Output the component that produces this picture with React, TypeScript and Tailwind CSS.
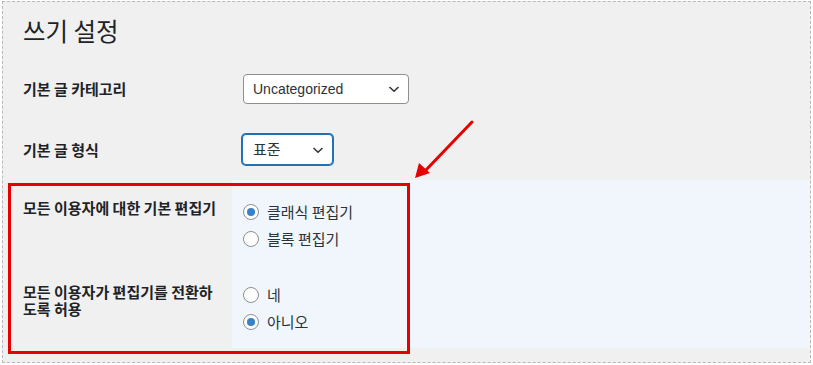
import { useState } from 'react';

const ko = { fontFamily: '"Noto Sans CJK KR", "Liberation Sans", sans-serif' };
const latin = { fontFamily: '"Liberation Sans", "Noto Sans CJK KR", sans-serif' };

function Chevron() {
  return (
    <svg width="12" height="12" viewBox="0 0 12 12" className="shrink-0">
      <path d="M1.5 4 L6 8.2 L10.5 4" fill="none" stroke="#2c3338" strokeWidth="1.5" />
    </svg>
  );
}

function Radio({ label, checked, onClick }: { label: string; checked: boolean; onClick: () => void }) {
  return (
    <div className="flex h-[27px] items-center gap-2 cursor-pointer" onClick={onClick}>
      <span className="flex h-4 w-4 items-center justify-center rounded-full border border-[#8c8f94] bg-white">
        {checked && <span className="h-2 w-2 rounded-full bg-[#3582c4]" />}
      </span>
      <span className="text-[15px] leading-[20px] text-[#2c3338]">{label}</span>
    </div>
  );
}

export default function App() {
  const [editor, setEditor] = useState('classic');
  const [allowSwitch, setAllowSwitch] = useState('no');

  return (
    <div className="w-[813px] h-[365px] bg-white pt-[1px] pl-[2px]" style={ko}>
      <div className="relative w-[809px] h-[362px] border border-dashed border-[#b9b9b9] bg-[#f0f0f1] text-[#1d2327]">
        <h1 className="mt-[14px] pl-[20px] h-[30px] text-[24.5px] leading-[30px] font-normal">쓰기 설정</h1>

        <div className="mt-[13px] flex h-[60px] items-center">
          <div className="w-[229px] pl-[20px] text-[15px] font-semibold leading-[18px]">기본 글 카테고리</div>
          <div className="pl-[11px]">
            <div className="flex h-[30px] w-[166px] items-center justify-between rounded-[4px] border border-[#8c8f94] bg-white pl-[9px] pr-[8px] text-[14px] text-[#2c3338]" style={latin}>
              <span>Uncategorized</span>
              <Chevron />
            </div>
          </div>
        </div>

        <div className="flex h-[61px] items-center">
          <div className="w-[229px] pl-[20px] text-[15px] font-semibold leading-[18px]">기본 글 형식</div>
          <div className="pl-[10px]">
            <div className="flex h-[31px] w-[91px] items-center justify-between rounded-[4px] border border-[#2271b1] bg-white pl-[10px] pr-[8px] text-[15px] text-[#2c3338] shadow-[0_0_0_1px_#2271b1]">
              <span>표준</span>
              <Chevron />
            </div>
          </div>
        </div>

        <div className="flex h-[86px]">
          <div className="w-[229px] pl-[20px] pt-[19px] text-[15px] font-semibold leading-[18px]">
            모든 이용자에 대한 기본 편집기
          </div>
          <div className="flex-1 bg-[#f0f6fc] pl-[11px] pt-[18px]">
            <Radio label="클래식 편집기" checked={editor === 'classic'} onClick={() => setEditor('classic')} />
            <Radio label="블록 편집기" checked={editor === 'block'} onClick={() => setEditor('block')} />
          </div>
        </div>

        <div className="flex h-[82px]">
          <div className="w-[229px] pl-[20px] pt-[17px] text-[15px] font-semibold">
            <div className="h-[17px] leading-[17px]">모든 이용자가 편집기를 전환하</div>
            <div className="h-[17px] leading-[17px]">도록 허용</div>
          </div>
          <div className="flex-1 bg-[#f0f6fc] pl-[11px] pt-[15px]">
            <Radio label="네" checked={allowSwitch === 'yes'} onClick={() => setAllowSwitch('yes')} />
            <Radio label="아니오" checked={allowSwitch === 'no'} onClick={() => setAllowSwitch('no')} />
          </div>
        </div>

        {/* annotation */}
        <div className="pointer-events-none absolute left-[5px] top-[181px] h-[171px] w-[402px] border-[3px] border-[#e60000]" />
        <svg className="pointer-events-none absolute left-0 top-0" width="809" height="362">
          <line x1="469" y1="120" x2="422" y2="169" stroke="#e60000" strokeWidth="3" strokeLinecap="round" />
          <polygon points="412,176 416,161 427,171" fill="#e60000" />
        </svg>
      </div>
    </div>
  );
}
